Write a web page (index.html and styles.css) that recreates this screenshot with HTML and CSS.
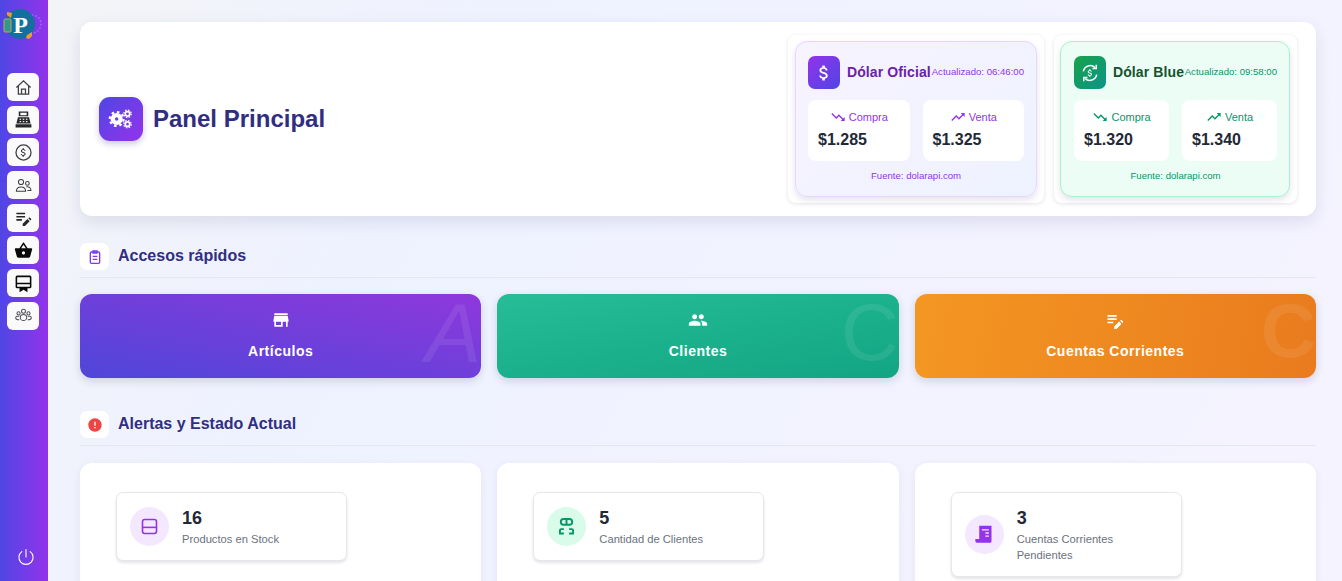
FILE: index.html
```html
<!DOCTYPE html>
<html lang="es">
<head>
  <meta charset="UTF-8">
  <meta name="viewport" content="width=device-width, initial-scale=1.0">
  <title>Panel Principal</title>
  <link rel="stylesheet" href="styles.css">
</head>
<body>
  <!-- Barra lateral -->
  <aside class="sidebar">
    <svg class="logo" viewBox="0 0 44 36">
      <circle cx="30" cy="16" r="9" fill="none" stroke="#a78bfa" stroke-width="1.500" stroke-dasharray="1.500 2" opacity=".7"/>
      <circle cx="18" cy="16" r="15" fill="#12709f"/>
      <path d="M5 4l5 1-1 5-4-3zM25 27l5-3v4l-3 3-3-1z" fill="#ee9a33"/>
      <rect x="2" y="11" width="7" height="13" rx="1" fill="#2f9a8c" stroke="#c9a050"/>
      <text x="18.500" y="25" class="logo-letter">P</text>
    </svg>
    <nav class="side-nav">
      <a class="side-btn"><svg viewBox="0 0 24 24" fill="none" stroke="#3f3f46" stroke-width="1.600"><path d="M3 12L12 3.500 21 12M5.500 10v10.500h13V10M9.500 20.500V14h5v6.500"/></svg></a>
      <a class="side-btn"><svg viewBox="0 0 24 24" fill="#27272a"><path d="M6 2h12v6H6zM8 3.500v3h8v-3z" fill-rule="evenodd"/><path d="M5 9h14l2 8H3zM2 18h20v4H2z"/><g fill="#fafafa"><rect x="7" y="11" width="2" height="1.400"/><rect x="11" y="11" width="2" height="1.400"/><rect x="15" y="11" width="2" height="1.400"/><rect x="7" y="14" width="2" height="1.400"/><rect x="11" y="14" width="2" height="1.400"/><rect x="15" y="14" width="2" height="1.400"/></g></svg></a>
      <a class="side-btn"><svg viewBox="0 0 24 24" fill="none" stroke="#3f3f46" stroke-width="1.600"><circle cx="12" cy="12" r="9.500"/><path transform="translate(4.800 4.800) scale(.6)" fill="#3f3f46" stroke="none" d="M11.800 10.900c-2.270-.59-3-1.200-3-2.150 0-1.090 1.010-1.850 2.700-1.850 1.780 0 2.440.85 2.500 2.100h2.210c-.07-1.720-1.120-3.300-3.210-3.810V3h-3v2.160c-1.940.42-3.500 1.680-3.500 3.610 0 2.310 1.910 3.460 4.700 4.130 2.500.6 3 1.480 3 2.410 0 .69-.49 1.790-2.700 1.790-2.060 0-2.870-.92-2.980-2.100h-2.200c.12 2.190 1.760 3.420 3.680 3.830V21h3v-2.150c1.950-.37 3.500-1.500 3.500-3.550 0-2.840-2.430-3.810-4.700-4.400z"/></svg></a>
      <a class="side-btn side-btn-sm"><svg viewBox="0 0 24 24" fill="none" stroke="#3f3f46" stroke-width="1.500"><circle cx="8.500" cy="7" r="3.600"/><circle cx="17.500" cy="9" r="2.600"/><path d="M2 20c0-4 3-6 6.500-6s6.500 2 6.500 6zM16 13.800c3.500-.5 6.500 1.200 6.500 5.200h-5"/></svg></a>
      <a class="side-btn"><svg viewBox="0 0 24 24" fill="#27272a"><path d="M3 10h11v2H3v-2zm0-2h11V6H3v2zm0 8h7v-2H3v2zm15.010-3.130.71-.71c.39-.39 1.020-.39 1.410 0l1.410 1.410c.39.39.39 1.020 0 1.410l-.71.71-2.820-2.820zm-1.060 1.060L11 19.880V22.700h2.820l5.950-5.950-2.820-2.820z"/></svg></a>
      <a class="side-btn"><svg viewBox="0 0 24 24" fill="#0a0a0a"><path d="M17.210 9l-4.380-6.560c-.19-.28-.51-.42-.83-.42-.32 0-.64.14-.83.43L6.790 9H2c-.55 0-1 .45-1 1 0 .09.01.18.04.27l2.540 9.270c.23.84 1 1.460 1.920 1.460h13c.92 0 1.690-.62 1.930-1.460l2.540-9.270L23 10c0-.55-.45-1-1-1h-4.790zM9 9l3-4.400L15 9H9zm3 8c-1.100 0-2-.9-2-2s.9-2 2-2 2 .9 2 2-.9 2-2 2z"/></svg></a>
      <a class="side-btn"><svg viewBox="0 0 24 24" fill="#0a0a0a"><path d="M4 2h16a2 2 0 0 1 2 2v12a2 2 0 0 1-2 2h-3v5l-5-3-5 3v-5H4a2 2 0 0 1-2-2V4a2 2 0 0 1 2-2zm0 2v7h16V4zm0 9v3h16v-3z" fill-rule="evenodd"/></svg></a>
      <a class="side-btn side-btn-sm"><svg viewBox="0 0 24 24" fill="none" stroke="#52525b" stroke-width="1.500"><circle cx="12" cy="6" r="2.800"/><circle cx="5" cy="9" r="2.200"/><circle cx="19" cy="9" r="2.200"/><path d="M7.500 15c0-3 2-4.500 4.500-4.500s4.500 1.500 4.500 4.500c0 2-2 4-4.500 4s-4.500-2-4.500-4zM6 13H3c-1.500 0-2 1-2 2.500S3 18 6 18M18 13h3c1.500 0 2 1 2 2.500S21 18 18 18"/></svg></a>
    </nav>
    <svg class="power" viewBox="0 0 24 24" fill="none" stroke="#fff" stroke-width="1.300" stroke-linecap="round"><path d="M12 3v9M7 5.500a8.500 8.500 0 1 0 10 0"/></svg>
  </aside>

  <main class="contenido">
    <!-- Cabecera -->
    <section class="cabecera">
      <div class="cabecera-titulo">
        <span class="cabecera-icono">
          <svg viewBox="0 0 30 24" fill="none" stroke="#fff">
            <circle cx="10" cy="12" r="4.500" stroke-width="5"/>
            <circle cx="10" cy="12" r="8" stroke-width="2.600" stroke-dasharray="3 3.280"/>
            <circle cx="22.500" cy="6" r="2.600" stroke-width="2"/>
            <circle cx="22.500" cy="6" r="4.300" stroke-width="1.400" stroke-dasharray="1.800 1.580"/>
            <circle cx="22.500" cy="18" r="2.600" stroke-width="2"/>
            <circle cx="22.500" cy="18" r="4.300" stroke-width="1.400" stroke-dasharray="1.800 1.580"/>
          </svg>
        </span>
        <h1>Panel Principal</h1>
      </div>
      <div class="cotizaciones">
        <div class="cotiz-marco marco-oficial">
          <div class="cotiz cotiz-oficial">
            <div class="cotiz-top">
              <span class="cotiz-icono"><svg viewBox="0 0 24 24" fill="#fff"><path d="M11.800 10.900c-2.270-.59-3-1.200-3-2.150 0-1.090 1.010-1.850 2.700-1.850 1.780 0 2.440.85 2.500 2.100h2.210c-.07-1.720-1.120-3.300-3.210-3.810V3h-3v2.160c-1.940.42-3.500 1.680-3.500 3.610 0 2.310 1.910 3.460 4.700 4.130 2.500.6 3 1.480 3 2.410 0 .69-.49 1.790-2.700 1.790-2.060 0-2.870-.92-2.980-2.100h-2.200c.12 2.190 1.760 3.420 3.680 3.830V21h3v-2.150c1.950-.37 3.500-1.500 3.500-3.550 0-2.840-2.430-3.810-4.700-4.400z"/></svg></span>
              <span class="cotiz-nombre">Dólar Oficial</span>
              <span class="cotiz-hora">Actualizado: 06:46:00</span>
            </div>
            <div class="cotiz-valores">
              <div class="valor-box">
                <div class="valor-label"><svg viewBox="0 0 24 24" fill="currentColor"><path d="M16 18l2.290-2.290-4.880-4.880-4 4L2 7.410 3.410 6l6 6 4-4 6.300 6.290L22 12v6z"/></svg>Compra</div>
                <div class="valor-num">$1.285</div>
              </div>
              <div class="valor-box">
                <div class="valor-label"><svg viewBox="0 0 24 24" fill="currentColor"><path d="M16 6l2.290 2.290-4.880 4.880-4-4L2 16.590 3.410 18l6-6 4 4 6.300-6.290L22 12V6z"/></svg>Venta</div>
                <div class="valor-num">$1.325</div>
              </div>
            </div>
            <div class="cotiz-fuente">Fuente: dolarapi.com</div>
          </div>
        </div>
        <div class="cotiz-marco marco-blue">
          <div class="cotiz cotiz-blue">
            <div class="cotiz-top">
              <span class="cotiz-icono"><svg viewBox="0 0 24 24" fill="none" stroke="#fff" stroke-width="1.800"><path d="M4 10a8.300 8.300 0 0 1 14-4.500M20 14a8.300 8.300 0 0 1-14 4.500"/><path d="M19.500 2v4.500H15M4.500 22v-4.500H9"/><path transform="translate(6 6) scale(.5)" fill="#fff" stroke="none" d="M11.800 10.900c-2.270-.59-3-1.200-3-2.150 0-1.090 1.010-1.850 2.700-1.850 1.780 0 2.440.85 2.500 2.100h2.210c-.07-1.720-1.120-3.300-3.210-3.810V3h-3v2.160c-1.940.42-3.500 1.680-3.500 3.610 0 2.310 1.910 3.460 4.700 4.130 2.500.6 3 1.480 3 2.410 0 .69-.49 1.790-2.700 1.790-2.060 0-2.870-.92-2.980-2.100h-2.200c.12 2.190 1.760 3.420 3.680 3.830V21h3v-2.150c1.950-.37 3.500-1.500 3.500-3.550 0-2.840-2.430-3.810-4.700-4.400z"/></svg></span>
              <span class="cotiz-nombre">Dólar Blue</span>
              <span class="cotiz-hora">Actualizado: 09:58:00</span>
            </div>
            <div class="cotiz-valores">
              <div class="valor-box">
                <div class="valor-label"><svg viewBox="0 0 24 24" fill="currentColor"><path d="M16 18l2.290-2.290-4.880-4.880-4 4L2 7.410 3.410 6l6 6 4-4 6.300 6.290L22 12v6z"/></svg>Compra</div>
                <div class="valor-num">$1.320</div>
              </div>
              <div class="valor-box">
                <div class="valor-label"><svg viewBox="0 0 24 24" fill="currentColor"><path d="M16 6l2.290 2.290-4.880 4.880-4-4L2 16.590 3.410 18l6-6 4 4 6.300-6.290L22 12V6z"/></svg>Venta</div>
                <div class="valor-num">$1.340</div>
              </div>
            </div>
            <div class="cotiz-fuente">Fuente: dolarapi.com</div>
          </div>
        </div>
      </div>
    </section>

    <!-- Accesos rapidos -->
    <div class="seccion-titulo">
      <span class="seccion-icono"><svg viewBox="0 0 24 24" fill="none" stroke="#7c3aed" stroke-width="2"><rect x="5" y="4.500" width="14" height="17" rx="2"/><path d="M9 3h6v3H9zM8.500 11h7M8.500 15.500h7"/></svg></span>
      <h2>Accesos rápidos</h2>
    </div>
    <div class="tres-col">
      <a class="acceso acceso-articulos">
        <svg viewBox="0 0 24 24" fill="#fff"><path d="M20 4H4v2h16V4zm1 10v-2l-1-5H4l-1 5v2h1v6h10v-6h4v6h2v-6h1zm-9 4H6v-4h6v4z"/></svg>
        <span>Artículos</span>
        <b class="acceso-letra">A</b>
      </a>
      <a class="acceso acceso-clientes">
        <svg viewBox="0 0 24 24" fill="#fff"><path d="M16 11c1.660 0 2.990-1.340 2.990-3S17.660 5 16 5c-1.660 0-3 1.340-3 3s1.340 3 3 3zm-8 0c1.660 0 2.990-1.340 2.990-3S9.660 5 8 5C6.340 5 5 6.340 5 8s1.340 3 3 3zm0 2c-2.330 0-7 1.170-7 3.500V19h14v-2.500c0-2.330-4.670-3.500-7-3.500zm8 0c-.29 0-.62.02-.97.05 1.160.84 1.970 1.970 1.970 3.450V19h6v-2.500c0-2.330-4.670-3.500-7-3.500z"/></svg>
        <span>Clientes</span>
        <b class="acceso-letra">C</b>
      </a>
      <a class="acceso acceso-cuentas">
        <svg viewBox="0 0 24 24" fill="#fff"><path d="M3 10h11v2H3v-2zm0-2h11V6H3v2zm0 8h7v-2H3v2zm15.010-3.130.71-.71c.39-.39 1.020-.39 1.410 0l1.410 1.410c.39.39.39 1.020 0 1.410l-.71.71-2.820-2.820zm-1.060 1.060L11 19.880V22.700h2.820l5.950-5.950-2.820-2.820z"/></svg>
        <span>Cuentas Corrientes</span>
        <b class="acceso-letra">C</b>
      </a>
    </div>

    <!-- Alertas -->
    <div class="seccion-titulo seccion-alertas">
      <span class="seccion-icono"><svg viewBox="0 0 24 24" fill="#ef4444"><path d="M12 2C6.480 2 2 6.480 2 12s4.480 10 10 10 10-4.480 10-10S17.520 2 12 2zm1 15h-2v-2h2v2zm0-4h-2V7h2v6z"/></svg></span>
      <h2>Alertas y Estado Actual</h2>
    </div>
    <div class="tres-col tres-col-alertas">
      <div class="alerta-card">
        <div class="stat">
          <span class="stat-icono stat-violeta"><svg viewBox="0 0 24 24" fill="none" stroke="#9333ea" stroke-width="1.800"><rect x="4" y="4" width="16" height="16" rx="2.500"/><path d="M4 13h16"/></svg></span>
          <div>
            <div class="stat-num">16</div>
            <div class="stat-label">Productos en Stock</div>
          </div>
        </div>
      </div>
      <div class="alerta-card">
        <div class="stat">
          <span class="stat-icono stat-verde"><svg viewBox="0 0 24 24" fill="none" stroke="#059669" stroke-width="2.200"><rect x="5.500" y="3.500" width="13" height="6.500" rx="3.250"/><path d="M12 3.500V10M9 15H6c-1 0-1.500.6-1.500 1.500V19M15 15h3c1 0 1.500.6 1.500 1.500V19M3.500 20H9M15 20h5.500"/></svg></span>
          <div>
            <div class="stat-num">5</div>
            <div class="stat-label">Cantidad de Clientes</div>
          </div>
        </div>
      </div>
      <div class="alerta-card">
        <div class="stat">
          <span class="stat-icono stat-violeta"><svg viewBox="0 0 24 24" fill="#9333ea"><path d="M6 2h14v17a3 3 0 0 1-1 2.500H4a2.500 2.500 0 0 1-2.500-2.500V17H6zM9 6v1.500h8V6zm4 3.500V11h4V9.500zm0 3.500v1.500h4V13z" fill-rule="evenodd"/></svg></span>
          <div>
            <div class="stat-num">3</div>
            <div class="stat-label">Cuentas Corrientes Pendientes</div>
          </div>
        </div>
      </div>
    </div>
  </main>
</body>
</html>
```

FILE: styles.css
```css
* {
  box-sizing: border-box;
}

html, body {
  height: 100%;
}

body {
  margin: 0;
  display: flex;
  overflow: hidden;
  font-family: "Liberation Sans", Arial, sans-serif;
  background: linear-gradient(120deg, #f3f4f6 0%, #eef2ff 30%, #f5f3ff 100%);
}

/* Barra lateral */
.sidebar {
  width: 48px;
  flex-shrink: 0;
  display: flex;
  flex-direction: column;
  align-items: center;
  padding: 8px 0 14px;
  background: linear-gradient(90deg, #4f46e5, #9333ea);
}

.logo {
  width: 44px;
  height: 36px;
}

.logo-letter {
  font-family: "Liberation Serif", serif;
  font-size: 24px;
  font-weight: 700;
  fill: #fff;
  text-anchor: middle;
}

.side-nav {
  display: flex;
  flex-direction: column;
  gap: 4.700px;
  margin: 29px 2px 0 0;
}

.side-btn {
  width: 32px;
  height: 28px;
  display: flex;
  align-items: center;
  justify-content: center;
  background: #fafafa;
  border-radius: 6px;
}

.side-btn svg {
  width: 19px;
  height: 19px;
}

.side-btn-sm svg {
  width: 17px;
  height: 17px;
}

.power {
  width: 20px;
  height: 20px;
  margin-top: auto;
  margin-left: 3px;
}

/* Contenido */
.contenido {
  flex: 1;
  min-width: 0;
  padding: 22px 26px 0 32px;
}

.cabecera {
  display: flex;
  align-items: center;
  justify-content: space-between;
  height: 194px;
  padding: 0 19px;
  background: #fff;
  border-radius: 12px;
  box-shadow: 0 6px 16px rgba(30, 30, 80, 0.1);
}

.cabecera-titulo {
  display: flex;
  align-items: center;
  gap: 10px;
}

.cabecera-icono {
  width: 44px;
  height: 44px;
  display: flex;
  align-items: center;
  justify-content: center;
  border-radius: 11px;
  background: linear-gradient(135deg, #4f46e5, #9333ea);
  box-shadow: 0 3px 6px rgba(60, 40, 150, 0.25);
}

.cabecera-icono svg {
  width: 26px;
  height: 22px;
}

h1 {
  margin: 0;
  font-size: 24px;
  font-weight: 700;
  color: #312e81;
}

.cotizaciones {
  display: flex;
  gap: 10px;
}

.cotiz-marco {
  padding: 6px 7px;
  background: #fff;
  border-radius: 8px;
  box-shadow: 0 1px 4px rgba(30, 30, 80, 0.12);
}

.marco-oficial {
  width: 256px;
}

.marco-blue {
  width: 243px;
  padding-left: 6px;
}

.cotiz {
  height: 156px;
  padding: 14px 12px 0;
  border: 1px solid;
  border-radius: 12px;
  box-shadow: 0 3px 6px rgba(30, 30, 80, 0.12);
}

.cotiz-oficial {
  color: #9333ea;
  border-color: #e9d5ff;
  background: linear-gradient(135deg, #f7f3ff, #eef2ff);
}

.cotiz-blue {
  padding-left: 13px;
  color: #059669;
  border-color: #a7f3d0;
  background: #ecfdf5;
}

.cotiz-top {
  display: flex;
  align-items: center;
  height: 33px;
}

.cotiz-icono {
  width: 32px;
  height: 33px;
  flex-shrink: 0;
  display: flex;
  align-items: center;
  justify-content: center;
  border-radius: 7px;
  margin-right: 7px;
}

.cotiz-icono svg {
  width: 20px;
  height: 20px;
}

.cotiz-oficial .cotiz-icono {
  background: linear-gradient(135deg, #9333ea, #4f46e5);
}

.cotiz-blue .cotiz-icono {
  background: linear-gradient(135deg, #16a34a, #0d9488);
}

.cotiz-nombre {
  font-size: 14px;
  font-weight: 700;
  letter-spacing: 0.1px;
  white-space: nowrap;
  margin-top: -1px;
}

.cotiz-oficial .cotiz-nombre {
  color: #6b21a8;
}

.cotiz-blue .cotiz-nombre {
  color: #14532d;
}

.cotiz-hora {
  flex: 1;
  text-align: right;
  font-size: 9.600px;
  white-space: nowrap;
  margin-top: -3px;
}

.cotiz-valores {
  display: grid;
  grid-template-columns: 1fr 1fr;
  gap: 13px;
  margin-top: 11px;
}

.valor-box {
  height: 61px;
  padding: 10px 10px 0;
  background: #fff;
  border-radius: 8px;
}

.valor-label {
  display: flex;
  align-items: center;
  justify-content: center;
  gap: 3px;
  height: 13px;
  font-size: 11px;
}

.valor-label svg {
  width: 16px;
  height: 16px;
}

.valor-num {
  margin-top: 8px;
  font-size: 16px;
  font-weight: 700;
  color: #1f2937;
}

.cotiz-fuente {
  margin-top: 9px;
  text-align: center;
  font-size: 9.600px;
}

/* Secciones */
.seccion-titulo {
  display: flex;
  align-items: center;
  gap: 9px;
  height: 35px;
  margin-top: 27px;
  padding-bottom: 7px;
  border-bottom: 1px solid #e5e7f0;
}

.seccion-alertas {
  margin-top: 33px;
}

.seccion-icono {
  width: 29px;
  height: 27px;
  display: flex;
  align-items: center;
  justify-content: center;
  background: #fff;
  border-radius: 7px;
}

.seccion-icono svg {
  width: 16px;
  height: 16px;
}

h2 {
  margin: 0 0 2px;
  font-size: 16px;
  font-weight: 700;
  color: #312e81;
}

.tres-col {
  display: grid;
  grid-template-columns: repeat(3, 1fr);
  gap: 16px;
  margin-top: 16px;
}

.tres-col-alertas {
  margin-top: 17px;
}

/* Accesos */
.acceso {
  position: relative;
  height: 84px;
  display: flex;
  flex-direction: column;
  align-items: center;
  padding-top: 16px;
  border-radius: 12px;
  color: #fff;
  font-size: 14px;
  font-weight: 700;
  letter-spacing: 0.500px;
  box-shadow: 0 3px 8px rgba(30, 30, 80, 0.16);
}

.acceso svg {
  width: 20px;
  height: 20px;
  margin-bottom: 13px;
}

.acceso-articulos {
  background: linear-gradient(to top right, #4f46d8, #8f38dc);
}

.acceso-clientes {
  background: linear-gradient(170deg, #26bd97, #12a583);
}

.acceso-cuentas {
  background: linear-gradient(100deg, #f49722, #e97b1e);
}

.acceso-letra {
  position: absolute;
  right: 0;
  top: 3px;
  font-size: 80px;
  font-weight: 400;
  letter-spacing: 0;
  line-height: 0.9;
  color: rgba(255, 255, 255, 0.08);
}

.acceso-articulos .acceso-letra {
  top: 2px;
  font-size: 84px;
  font-style: italic;
}

.acceso-cuentas .acceso-letra {
  font-weight: 700;
  font-size: 76px;
}

/* Alertas */
.alerta-card {
  height: 200px;
  padding: 29px 36px;
  background: #fff;
  border-radius: 12px;
  box-shadow: 0 2px 8px rgba(30, 30, 80, 0.06);
}

.stat {
  width: 231px;
  display: flex;
  align-items: center;
  gap: 13px;
  padding: 13px;
  border: 1px solid #e5e7eb;
  border-radius: 7px;
  background: #fff;
  box-shadow: 0 2px 3px rgba(30, 30, 80, 0.12);
}

.stat-icono {
  width: 39px;
  height: 39px;
  flex-shrink: 0;
  display: flex;
  align-items: center;
  justify-content: center;
  border-radius: 50%;
}

.stat-icono svg {
  width: 21px;
  height: 21px;
}

.stat-violeta {
  background: #f3e8ff;
}

.stat-verde {
  background: #d9fbe9;
}

.stat-num {
  margin-top: 1px;
  font-size: 18px;
  font-weight: 700;
  line-height: 22px;
  color: #1f2937;
}

.stat-label {
  margin-top: 2px;
  font-size: 11.200px;
  line-height: 16px;
  color: #6b7280;
}
```
